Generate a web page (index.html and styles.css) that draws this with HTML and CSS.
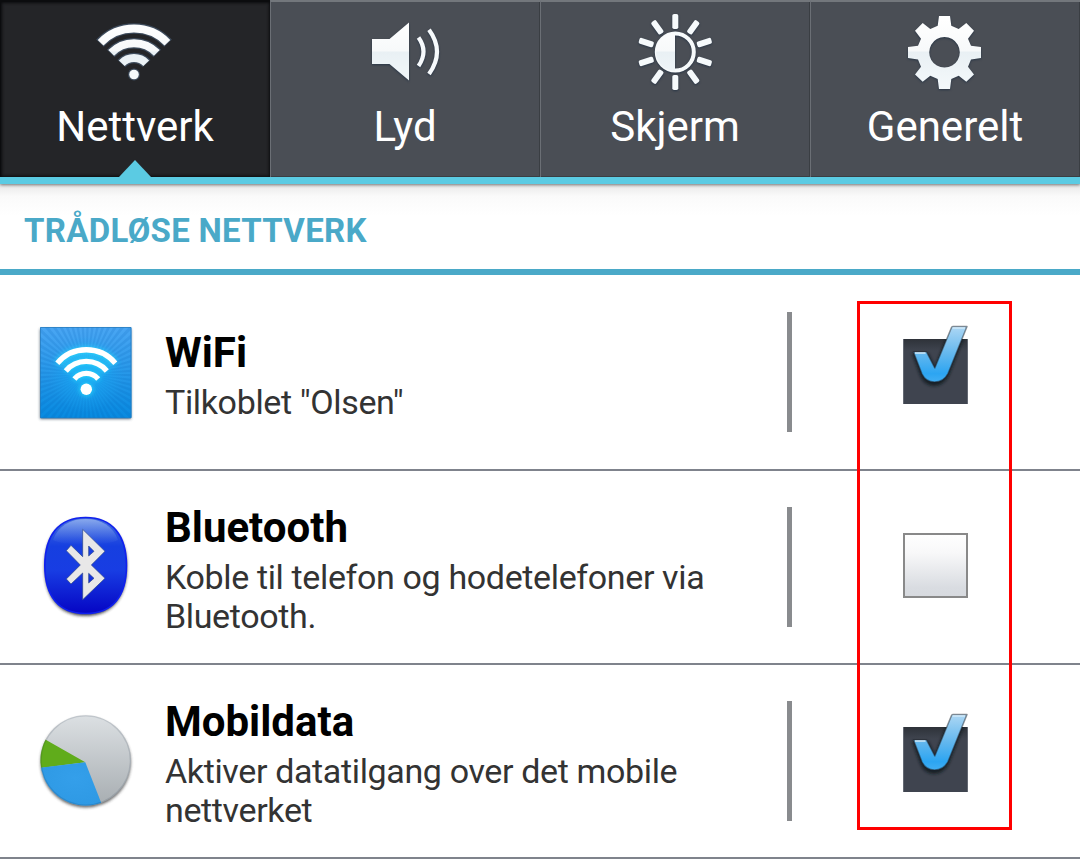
FILE: index.html
```html
<!DOCTYPE html>
<html lang="nb">
<head>
<meta charset="utf-8">
<title>Innstillinger</title>
<link rel="stylesheet" href="styles.css">
</head>
<body>
<svg class="defs" width="0" height="0" aria-hidden="true">
  <defs>
    <linearGradient id="ice" x1="0" y1="0" x2="0" y2="100" gradientUnits="userSpaceOnUse">
      <stop offset="0.2" stop-color="#fff"/><stop offset="0.51" stop-color="#f7f9fa"/><stop offset="0.52" stop-color="#e9f0f4"/><stop offset="0.9" stop-color="#f4f9fb"/>
    </linearGradient>
    <linearGradient id="tick" x1="0" y1="0" x2="0" y2="1">
      <stop offset="0" stop-color="#add7f4"/><stop offset="0.5" stop-color="#62b7ee"/><stop offset="0.85" stop-color="#2ca5f2"/><stop offset="1" stop-color="#41aef3"/>
    </linearGradient>
    <filter id="soft" x="-30%" y="-30%" width="160%" height="160%"><feGaussianBlur stdDeviation="1.5"/></filter>
    <filter id="glow" x="-30%" y="-30%" width="160%" height="160%"><feGaussianBlur stdDeviation="2.5"/></filter>
    <symbol id="check" viewBox="0 0 80 90">
      <rect x="8" y="19" width="65" height="65" fill="#3f444f"/>
      <rect x="8" y="19" width="65" height="12" fill="url(#boxtop)"/>
      <path d="M8.500 19v65M72.500 19v65" stroke="#646973"/>
      <path d="M17 33H33L40 47 56 7H73L54 55Q49 66 39 66 29 66 25 55Z" fill="#10151c" opacity=".8" filter="url(#soft)" clip-path="url(#boxclip)"/>
      <path d="M18.500 32H31.500L39.800 48 56.500 7.500Q57 6.500 58.200 6.500H72L53 53.500Q48.500 62 39.500 62 31 62 27 54Z" fill="url(#tick)" stroke="#20262e" stroke-opacity=".5" stroke-width="1.500" stroke-linejoin="round"/>
      <path d="M20 33H30.500M57.500 8H70" fill="none" stroke="#cfe9f9" stroke-width="1.500"/>
    </symbol>
    <linearGradient id="boxtop" x1="0" y1="0" x2="0" y2="1"><stop offset="0" stop-color="#2e3239"/><stop offset="1" stop-color="#3f444f"/></linearGradient>
    <clipPath id="boxclip"><rect x="8" y="19" width="65" height="65"/></clipPath>
  </defs>
</svg>

<nav class="tabs">
  <div class="tab tab-active">
    <svg class="tab-icon" viewBox="85 0 100 100">
      <g fill="none" stroke="#3d4b5c" stroke-width="10.500">
        <path d="M100 43.200A46.500 46.500 0 0 1 168 43.200M110.800 53.400A31.700 31.700 0 0 1 157.200 53.400M121.400 63.600A17 17 0 0 1 146.600 63.600"/>
      </g>
      <circle cx="134" cy="74.500" r="6" fill="#3d4b5c"/>
      <g fill="none" stroke="url(#ice)" stroke-width="8">
        <path d="M100.600 42.700A46.500 46.500 0 0 1 167.400 42.700M111.200 52.900A31.700 31.700 0 0 1 156.800 52.900M121.800 63.200A17 17 0 0 1 146.200 63.200"/>
      </g>
      <circle cx="134" cy="74.500" r="4.800" fill="#f4f9fb"/>
    </svg>
    <span class="tab-label">Nettverk</span>
  </div>
  <div class="tab">
    <svg class="tab-icon icon-shadow" viewBox="355 0 100 100">
      <path d="M372 39h17.500L409 22.500v58L389.500 64H372z" fill="url(#ice)"/>
      <path d="M418.500 37.500Q428.500 51.500 418.500 66M429 29.700Q445 51.500 429 74" fill="none" stroke="#f7fafc" stroke-width="4.200"/>
    </svg>
    <span class="tab-label">Lyd</span>
  </div>
  <div class="tab">
    <svg class="tab-icon icon-shadow" viewBox="625 0 100 100">
      <defs><g id="ray"><rect x="672.300" y="14" width="6" height="15" rx="1.800"/><rect x="672.300" y="75" width="6" height="15" rx="1.800"/></g></defs>
      <circle cx="675.300" cy="52" r="18.500" fill="none" stroke="#f7fafb" stroke-width="4"/>
      <path d="M675 33a19 19 0 0 0 0 38z" fill="url(#ice)"/>
      <g fill="#f6fafc">
        <use href="#ray"/>
        <use href="#ray" transform="rotate(36 675.300 52)"/>
        <use href="#ray" transform="rotate(72 675.300 52)"/>
        <use href="#ray" transform="rotate(108 675.300 52)"/>
        <use href="#ray" transform="rotate(144 675.300 52)"/>
      </g>
    </svg>
    <span class="tab-label">Skjerm</span>
  </div>
  <div class="tab">
    <svg class="tab-icon icon-shadow" viewBox="895 0 100 100">
      <path fill="url(#ice)" fill-rule="evenodd" d="M939 16h11l1.300 9.700 7.400 3.300 7.600-6 7.700 7.700-6 8 3 7 10 1.300v11l-10 1.500-3 7.200 6 7.700-7.700 7.400-7.600-6-7.400 3.200L950 89h-11l-1.300-10-7.400-3.200-7.600 6-7.700-7.400 6-7.700-3-7.200-10-1.500V47l10-1.300 3-7-6-8 7.700-7.700 7.600 6 7.400-3.300zM944.500 37a15.300 15.300 0 1 0 .01 0z"/>
    </svg>
    <span class="tab-label">Generelt</span>
  </div>
</nav>

<main class="settings">
  <h2 class="section-title">TRÅDLØSE NETTVERK</h2>
  <section class="row row-first">
    <svg class="row-icon" viewBox="30 317 112 112">
      <defs>
        <linearGradient id="wf" x1="0" y1="0" x2="0" y2="1"><stop offset="0" stop-color="#4aa6f3"/><stop offset=".5" stop-color="#2798e9"/><stop offset="1" stop-color="#078ae0"/></linearGradient>
        <radialGradient id="wg"><stop offset="0" stop-color="#17a7f4"/><stop offset="1" stop-color="#17a7f4" stop-opacity="0"/></radialGradient>
        <clipPath id="wc"><rect x="40" y="327" width="91" height="91"/></clipPath>
      </defs>
      <rect x="40" y="329" width="91" height="90" fill="#345" opacity=".75" filter="url(#soft)"/>
      <rect x="40" y="327" width="91.500" height="91" rx="1" fill="url(#wf)"/>
      <g clip-path="url(#wc)"><circle cx="86" cy="374" r="45" fill="none" stroke="#0061b5" stroke-opacity=".15" stroke-width="90" stroke-dasharray="2.356 2.356"/></g>
      <circle cx="86" cy="374" r="38" fill="url(#wg)"/>
      <path d="M40.500 327.500h90.500v90.500H40.500z" fill="none" stroke="#2879b8" stroke-opacity=".7"/>
      <g fill="none" stroke="#2be0ff" stroke-width="7" stroke-opacity=".85" filter="url(#glow)">
        <path d="M57.600 363.600A38 38 0 0 1 115 363.600M66 370.800A26.700 26.700 0 0 1 106.500 370.800M74.300 379.200A15.500 15.500 0 0 1 98.300 379.200"/>
        <circle cx="86.300" cy="389.300" r="3"/>
      </g>
      <path d="M57.300 363.200A38 38 0 0 1 115.300 363.200M65.800 371A26.700 26.700 0 0 1 106.800 371M74.400 379A15.500 15.500 0 0 1 98.200 379" fill="none" stroke="#fff" stroke-width="5.300"/>
      <circle cx="86.300" cy="389.300" r="5.700" fill="#fff"/>
    </svg>
    <div class="row-text">
      <h3 class="row-title">WiFi</h3>
      <p class="row-sub">Tilkoblet "Olsen"</p>
    </div>
    <span class="divider"></span>
    <svg class="checkbox" viewBox="0 0 80 90"><use href="#check"/></svg>
  </section>
  <section class="row">
    <svg class="row-icon" viewBox="30 510 112 112">
      <defs>
        <linearGradient id="bt" x1="0" y1="0" x2="0" y2="1"><stop offset="0" stop-color="#456fdf"/><stop offset=".3" stop-color="#163fe0"/><stop offset=".55" stop-color="#183de3"/><stop offset="1" stop-color="#0505c4"/></linearGradient>
        <linearGradient id="bs" x1="0" y1="0" x2="0" y2="1"><stop offset="0" stop-color="#90afee" stop-opacity=".9"/><stop offset="1" stop-color="#6289e8" stop-opacity="0"/></linearGradient>
      </defs>
      <path d="M85.700 519C112 519 127 538 127 567S113 616 85.700 616 44.500 597 44.500 567 59 519 85.700 519Z" fill="#222" opacity=".8" filter="url(#soft)"/>
      <path d="M85.700 517.500C112 517.500 126.500 535 126.500 565.500S113 613.500 85.700 613.500 44.800 596 44.800 565.500 59 517.500 85.700 517.500Z" fill="url(#bt)" stroke="#1021ee" stroke-width="1.600"/>
      <path d="M85.700 519C101 519 113 526 118 540 108 546 63 546 53 540 58 526 70 519 85.700 519Z" fill="url(#bs)"/>
      <path transform="translate(20 500) scale(.3333)" fill="#e8e8e8" fill-rule="evenodd" stroke="#284487" stroke-width="2" d="M188 88 255 154 214 195 255 235 188 299V219L153 252 139 237 181 195 139 152 153 136 188 170ZM206 138V168L222 154ZM206 220V249L222 235Z"/>
    </svg>
    <div class="row-text">
      <h3 class="row-title">Bluetooth</h3>
      <p class="row-sub">Koble til telefon og hodetelefoner via<br>Bluetooth.</p>
    </div>
    <span class="divider"></span>
    <svg class="checkbox" viewBox="0 0 80 90">
      <defs><linearGradient id="empty" x1="0" y1="0" x2="0" y2="1"><stop offset="0" stop-color="#fff"/><stop offset=".3" stop-color="#f8f8f9"/><stop offset=".85" stop-color="#d9dce1"/><stop offset="1" stop-color="#d7dadf"/></linearGradient></defs>
      <rect x="9" y="20" width="63" height="63" fill="url(#empty)" stroke="#898989" stroke-width="2"/>
    </svg>
  </section>
  <section class="row">
    <svg class="row-icon" viewBox="30 704 112 112">
      <defs>
        <linearGradient id="gr" x1="0" y1="0" x2="0" y2="1"><stop offset="0" stop-color="#dce0e3"/><stop offset="1" stop-color="#a7adb1"/></linearGradient>
        <radialGradient id="bl" cx=".6" cy=".3" r=".9"><stop offset="0" stop-color="#349fea"/><stop offset=".6" stop-color="#2e99e4"/><stop offset="1" stop-color="#1f7fc6"/></radialGradient>
        <clipPath id="pie"><circle cx="85.700" cy="760.500" r="45.300"/></clipPath>
      </defs>
      <circle cx="85.700" cy="762.500" r="45" fill="#333" opacity=".75" filter="url(#soft)"/>
      <circle cx="85.700" cy="760.500" r="45.300" fill="url(#gr)"/>
      <g clip-path="url(#pie)">
        <path d="M85.300 762.300 34 733V769L41 768Z" fill="#60ac1b"/>
        <path d="M85.300 762.300 30 769V815H106Z" fill="url(#bl)"/>
        <circle cx="85.700" cy="760.500" r="45" fill="none" stroke="#123" stroke-opacity=".13" stroke-width="2"/>
      </g>
    </svg>
    <div class="row-text">
      <h3 class="row-title">Mobildata</h3>
      <p class="row-sub">Aktiver datatilgang over det mobile<br>nettverket</p>
    </div>
    <span class="divider"></span>
    <svg class="checkbox" viewBox="0 0 80 90"><use href="#check"/></svg>
  </section>
  <div class="highlight"></div>
</main>
</body>
</html>
```

FILE: styles.css
```css
* { box-sizing: border-box; }
body {
  margin: 0;
  width: 1080px;
  height: 859px;
  overflow: hidden;
  background: #fff;
  font-family: Roboto, "Liberation Sans", sans-serif;
}
.defs { position: absolute; }
h2, h3, p { margin: 0; }

.tabs {
  position: relative;
  display: grid;
  grid-template-columns: repeat(4, 270px);
  height: 184px;
  border-bottom: 7px solid #5bcbe3;
  box-shadow: 0 1px 3px rgba(0, 0, 0, .5);
}
.tab {
  position: relative;
  display: flex;
  flex-direction: column;
  align-items: center;
  height: 177px;
  padding-right: 1px;
  background: #4a4e55;
  color: #fff;
  border-top: 2px solid #73777c;
  border-left: 1px solid #6b6f75;
  box-shadow: inset -1px -1px 0 #3a3e43;
}
.tab-active {
  background: #242528;
  border-top-color: #0b0c0e;
  border-left-color: #0b0c0e;
  box-shadow: inset 0 0 3px 1px #0b0c0e;
}
.tab-active::after {
  content: "";
  position: absolute;
  left: 118px;
  bottom: 0;
  border: 16px solid transparent;
  border-top: 0;
  border-bottom: 17px solid #5bcbe3;
}
.tab-icon { display: block; width: 100px; height: 100px; margin: -2px 1px 0 0; flex: none; }
.icon-shadow { filter: drop-shadow(0 1px 1px rgba(30, 45, 65, .75)); }
.tab-label { font-size: 42px; line-height: 50px; margin-top: 2px; white-space: nowrap; }

.section-title {
  height: 91px;
  padding: 28px 0 0 24px;
  border-bottom: 6px solid #4aa9c8;
  background: linear-gradient(#e8e8e8, #fafafa 12px, #fff 32px);
  color: #4aa9c8;
  font-size: 33px;
  line-height: 38px;
  font-weight: 700;
  letter-spacing: .3px;
}
.row {
  display: grid;
  grid-template-columns: 112px 645px 5px 80px;
  height: 194px;
  padding-left: 30px;
  border-bottom: 2px solid #7f838c;
}
.row-first { height: 196px; }
.row-icon { width: 112px; height: 112px; margin-top: 39px; }
.row-first .row-icon { margin-top: 42px; }
.row-text { padding: 32px 0 0 23px; }
.row-first .row-text { padding-top: 53px; }
.row-title { color: #000; font-size: 42px; line-height: 50px; font-weight: 700; }
.row-sub {
  margin-top: 5px;
  color: #333;
  font-size: 34px;
  line-height: 39px;
  letter-spacing: -.36px;
  white-space: nowrap;
}
.divider { width: 5px; height: 120px; margin-top: 36px; background: #898b8e; }
.row-first .divider { margin-top: 37px; }
.checkbox { width: 80px; height: 90px; margin: 43px 0 0 103px; }
.row-first .checkbox { margin-top: 45px; }
.highlight {
  position: absolute;
  left: 857px;
  top: 301px;
  width: 155px;
  height: 529px;
  border: 3px solid #f00;
}
```
